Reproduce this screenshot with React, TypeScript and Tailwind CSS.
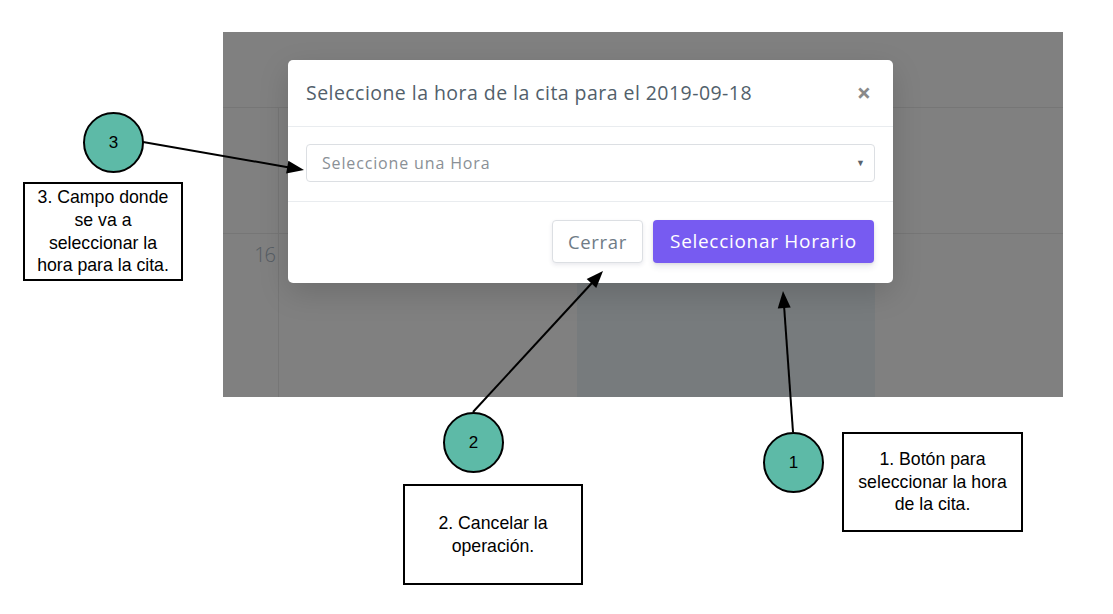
import React from "react";

type Arrow = { x1: number; y1: number; x2: number; y2: number };

const arrows: Arrow[] = [
  { x1: 143, y1: 142, x2: 304, y2: 170 },
  { x1: 473, y1: 412, x2: 603, y2: 271 },
  { x1: 793, y1: 432, x2: 783, y2: 291 },
];

function ArrowShape({ a }: { a: Arrow }) {
  const dx = a.x2 - a.x1;
  const dy = a.y2 - a.y1;
  const len = Math.sqrt(dx * dx + dy * dy);
  const ux = dx / len;
  const uy = dy / len;
  const hl = 17;
  const hw = 6.5;
  const bx = a.x2 - ux * hl;
  const by = a.y2 - uy * hl;
  const px = -uy;
  const py = ux;
  const pts = `${a.x2},${a.y2} ${bx + px * hw},${by + py * hw} ${bx - px * hw},${by - py * hw}`;
  return (
    <g>
      <line x1={a.x1} y1={a.y1} x2={bx + ux * 2} y2={by + uy * 2} stroke="#000" strokeWidth={2} />
      <polygon points={pts} fill="#000" />
    </g>
  );
}

function Circle({ n, className }: { n: string; className: string }) {
  return (
    <div
      className={`absolute w-[61px] h-[61px] rounded-full border-2 border-black bg-[#5dbaa7] flex items-center justify-center text-[17px] text-black ${className}`}
      style={{ fontFamily: '"Liberation Sans", Arial, sans-serif' }}
    >
      {n}
    </div>
  );
}

function Note({ lines, className }: { lines: string[]; className: string }) {
  return (
    <div
      className={`absolute border-2 border-black bg-white flex flex-col items-center justify-center text-center text-[17.7px] leading-[22.6px] text-black ${className}`}
      style={{ fontFamily: '"Liberation Sans", Arial, sans-serif' }}
    >
      {lines.map((l) => (
        <div key={l} className="whitespace-nowrap">
          {l}
        </div>
      ))}
    </div>
  );
}

export default function App() {
  const ui = { fontFamily: '"Open Sans", "Noto Sans", sans-serif' };
  return (
    <div className="relative w-[1113px] h-[614px] bg-white overflow-hidden">
      {/* screenshot of the calendar app */}
      <div className="absolute left-[223px] top-[32px] w-[840px] h-[365px] bg-[#808080] overflow-hidden flex flex-col" style={ui}>
        <div className="h-[75px] shrink-0" />
        <div className="h-[126px] shrink-0 border-t border-[#767676] flex">
          <div className="w-[56px] border-r border-[#767676]" />
        </div>
        <div className="flex-1 border-t border-[#767676] flex">
          <div className="w-[56px] border-r border-[#767676] flex justify-end pr-[3px] pt-[6px]">
            <span className="text-[20px] font-light text-[#555c63] tracking-[-1px]">16</span>
          </div>
          <div className="w-[298px]" />
          <div className="w-[298px] bg-[#777b7d]" />
          <div className="flex-1" />
        </div>

        {/* modal */}
        <div className="absolute left-[65px] top-[28px] w-[605px] h-[223px] bg-white rounded-[5px] shadow-[0_10px_30px_rgba(0,0,0,0.15)] flex flex-col">
          <div className="h-[67px] shrink-0 flex items-center justify-between pl-[18px] pr-[22px] border-b border-[#e9ecef]">
            <span className="text-[19.5px] text-[#525f6b] tracking-[0.45px]">Seleccione la hora de la cita para el 2019-09-18</span>
            <span className="text-[25px] font-bold text-[#8a8a8a] leading-none mt-[-2px]">×</span>
          </div>
          <div className="shrink-0 px-[18px] pt-[17px] pb-[19px] border-b border-[#e9ecef]">
            <div className="h-[38px] rounded-[4px] border border-[#dcdfe3] flex items-center justify-between pl-[15px] pr-[9px]">
              <span className="text-[16px] text-[#8a9096] tracking-[0.85px]">Seleccione una Hora</span>
              <span className="text-[9px] text-[#59636d]">▼</span>
            </div>
          </div>
          <div className="flex justify-end gap-[10px] pt-[18px] pr-[19px]">
            <div className="w-[91px] h-[43px] rounded-[4px] border border-[#dcdfe3] bg-white shadow-[0_2px_4px_rgba(50,50,93,0.1)] flex items-center justify-center text-[18.5px] text-[#6f7b86] tracking-[0.7px]">
              Cerrar
            </div>
            <div className="w-[221px] h-[43px] rounded-[4px] bg-[#775bf1] shadow-[0_4px_6px_rgba(50,50,93,0.11),0_1px_3px_rgba(0,0,0,0.08)] flex items-center justify-center text-[19px] text-white tracking-[0.7px]">
              Seleccionar Horario
            </div>
          </div>
        </div>
      </div>

      {/* arrows */}
      <svg className="absolute inset-0 pointer-events-none" width={1113} height={614} viewBox="0 0 1113 614">
        {arrows.map((a, i) => (
          <ArrowShape key={i} a={a} />
        ))}
      </svg>

      <Circle n="3" className="left-[83px] top-[112px]" />
      <Note lines={["3. Campo donde", "se va a", "seleccionar la", "hora para la cita."]} className="left-[23px] top-[182px] w-[160px] h-[99px]" />

      <Circle n="2" className="left-[443px] top-[412px]" />
      <Note lines={["2. Cancelar la", "operación."]} className="left-[403px] top-[484px] w-[180px] h-[101px]" />

      <Circle n="1" className="left-[763px] top-[432px]" />
      <Note lines={["1. Botón para", "seleccionar la hora", "de la cita."]} className="left-[842px] top-[432px] w-[181px] h-[100px]" />
    </div>
  );
}
